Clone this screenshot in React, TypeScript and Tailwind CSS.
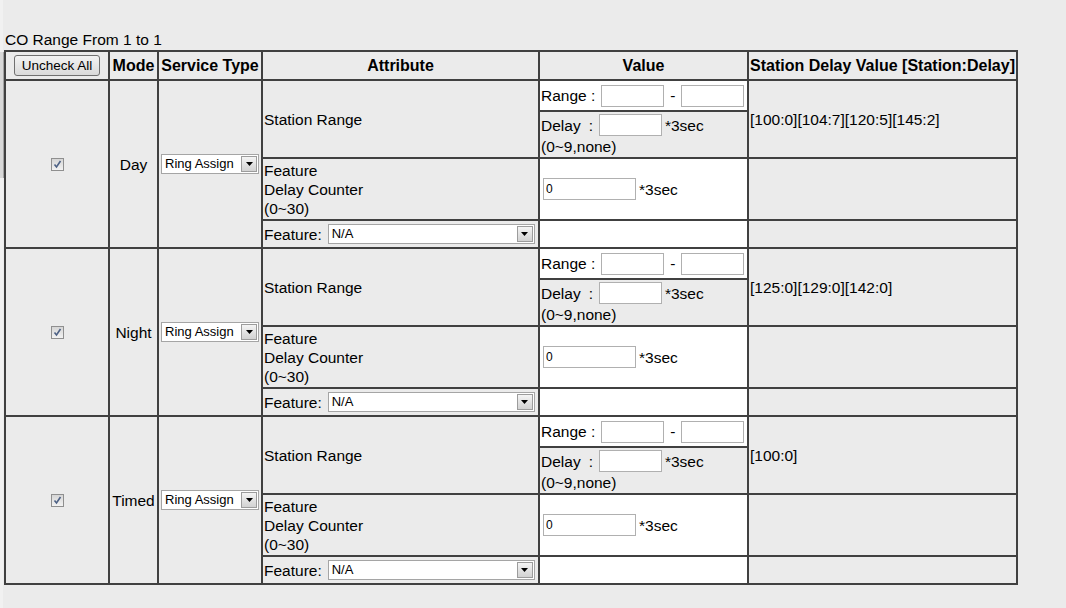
const cell = "border border-[#404040] p-[1px] align-middle";
const th = "border border-[#404040] p-[1px] h-[29px] text-[16px] font-bold text-center align-middle";

function TextBox({ w, value = "" }: { w: string; value?: string }) {
  return (
    <input
      defaultValue={value}
      className={`${w} h-[22px] border border-[#b0b0b0] bg-white px-[2px] text-[12px] leading-[18px] text-black outline-none font-['Liberation_Sans',Arial,sans-serif]`}
    />
  );
}

function Dropdown({ w, text }: { w: string; text: string }) {
  return (
    <div className={`${w} flex h-[20px] items-center border border-[#a5a5a5] bg-white text-[13px] leading-[16px]`}>
      <span className="flex-1 truncate pl-[3px] text-left">{text}</span>
      <span className="mr-[1px] flex h-[16px] w-[16px] items-center justify-center border border-[#9c9c9c] bg-gradient-to-b from-[#f4f4f4] to-[#d2d2d2]">
        <svg width="7" height="4" viewBox="0 0 7 4">
          <path d="M0 0h7L3.5 4z" fill="#000" />
        </svg>
      </span>
    </div>
  );
}

function Check() {
  return (
    <span className="inline-flex h-[13px] w-[13px] items-center justify-center border border-[#8f8f8f] bg-gradient-to-b from-[#d6d6d6] to-[#f2f2f2]">
      <svg width="9" height="9" viewBox="0 0 9 9">
        <path d="M1.5 4.5l2 2.5 4-6" stroke="#4d6185" strokeWidth="1.6" fill="none" />
      </svg>
    </span>
  );
}

type Block = { mode: string; stations: string };

const blocks: Block[] = [
  { mode: "Day", stations: "[100:0][104:7][120:5][145:2]" },
  { mode: "Night", stations: "[125:0][129:0][142:0]" },
  { mode: "Timed", stations: "[100:0]" },
];

function ModeRows({ mode, stations }: Block) {
  return (
    <>
      <tr>
        <td rowSpan={4} className={`${cell} text-center`}>
          <div className="flex justify-center">
            <Check />
          </div>
        </td>
        <td rowSpan={4} className={`${cell} text-center`}>
          {mode}
        </td>
        <td rowSpan={4} className={cell}>
          <div className="flex justify-center">
            <Dropdown w="w-[98px]" text="Ring Assign" />
          </div>
        </td>
        <td rowSpan={2} className={cell}>
          Station Range
        </td>
        <td className={`${cell} h-[31px] bg-white`}>
          <div className="flex items-center">
            <span>Range :</span>
            <span className="ml-[6px]">
              <TextBox w="w-[63px]" />
            </span>
            <span className="mx-[6px]">-</span>
            <TextBox w="w-[63px]" />
          </div>
        </td>
        <td rowSpan={2} className={cell}>
          {stations}
        </td>
      </tr>
      <tr>
        <td className={`${cell} h-[47px]`}>
          <div className="flex h-[24px] items-center">
            <span>Delay</span>
            <span className="ml-[8px]">:</span>
            <span className="ml-[6px]">
              <TextBox w="w-[63px]" />
            </span>
            <span className="ml-[3px]">*3sec</span>
          </div>
          <div>(0~9,none)</div>
        </td>
      </tr>
      <tr>
        <td className={`${cell} h-[62px]`}>
          Feature
          <br />
          Delay Counter
          <br />
          (0~30)
        </td>
        <td className={`${cell} bg-white`}>
          <div className="flex items-center">
            <span className="ml-[2px]">
              <TextBox w="w-[93px]" value="0" />
            </span>
            <span className="ml-[3px]">*3sec</span>
          </div>
        </td>
        <td className={cell}></td>
      </tr>
      <tr>
        <td className={`${cell} h-[28px]`}>
          <div className="flex items-center">
            <span>Feature:</span>
            <span className="ml-[6px]">
              <Dropdown w="w-[207px]" text="N/A" />
            </span>
          </div>
        </td>
        <td className={`${cell} bg-white`}></td>
        <td className={cell}></td>
      </tr>
    </>
  );
}

export default function App() {
  return (
    <div className="relative min-h-[608px] bg-[#ebebeb] text-[15.5px] leading-[19px] text-black font-['Liberation_Sans',Arial,sans-serif]">
      <div className="absolute left-0 top-0 h-full w-[3px] bg-[#f1f1f1]" />
      <div className="absolute left-0 top-[52px] h-[126px] w-[4px] border-r border-[#a3a3a3] bg-[#d8d8d8]" />

      <div className="pl-[5px] pt-[30px]">CO Range From 1 to 1</div>

      <table className="ml-[4px] mt-[1px] w-[1014px] table-fixed border-separate border-spacing-0 border border-[#404040]">
        <thead>
          <tr>
            <th className={`${th} w-[104px]`}>
              <div className="flex justify-center">
                <button className="h-[21px] w-[86px] rounded-[3px] border border-[#707070] bg-gradient-to-b from-[#f3f3f3] to-[#dadada] text-[13.5px] font-normal leading-[17px]">
                  Uncheck All
                </button>
              </div>
            </th>
            <th className={`${th} w-[49px]`}>Mode</th>
            <th className={`${th} w-[104px]`}>Service Type</th>
            <th className={`${th} w-[277px]`}>Attribute</th>
            <th className={`${th} w-[209px]`}>Value</th>
            <th className={`${th} w-[269px]`}>Station Delay Value [Station:Delay]</th>
          </tr>
        </thead>
        <tbody>
          {blocks.map((b) => (
            <ModeRows key={b.mode} {...b} />
          ))}
        </tbody>
      </table>
    </div>
  );
}
